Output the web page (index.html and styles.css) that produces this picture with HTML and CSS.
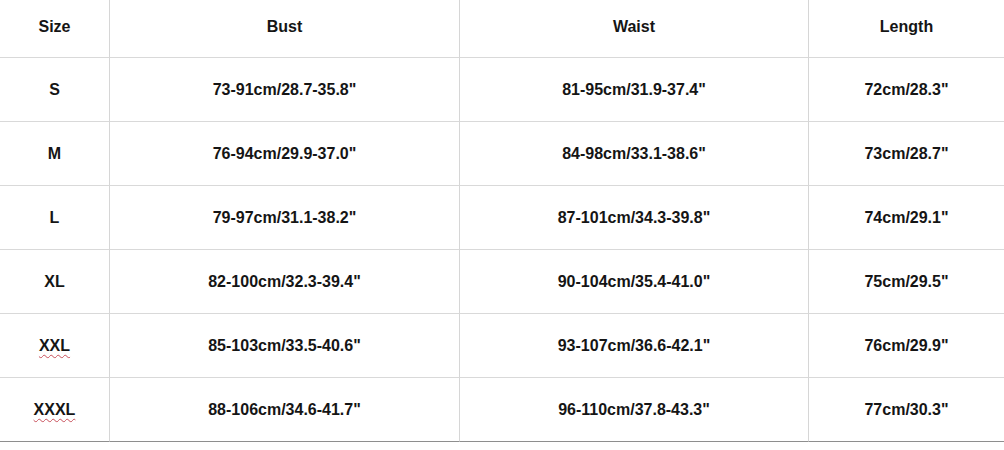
FILE: index.html
```html
<!DOCTYPE html>
<html lang="en">
<head>
<meta charset="utf-8">
<title>Size Chart</title>
<link rel="stylesheet" href="styles.css">
</head>
<body>
<div class="chart">
  <div class="cell head">Size</div>
  <div class="cell head">Bust</div>
  <div class="cell head">Waist</div>
  <div class="cell head last">Length</div>

  <div class="cell">S</div>
  <div class="cell">73-91cm/28.7-35.8"</div>
  <div class="cell">81-95cm/31.9-37.4"</div>
  <div class="cell last">72cm/28.3"</div>

  <div class="cell">M</div>
  <div class="cell">76-94cm/29.9-37.0"</div>
  <div class="cell">84-98cm/33.1-38.6"</div>
  <div class="cell last">73cm/28.7"</div>

  <div class="cell">L</div>
  <div class="cell">79-97cm/31.1-38.2"</div>
  <div class="cell">87-101cm/34.3-39.8"</div>
  <div class="cell last">74cm/29.1"</div>

  <div class="cell">XL</div>
  <div class="cell">82-100cm/32.3-39.4"</div>
  <div class="cell">90-104cm/35.4-41.0"</div>
  <div class="cell last">75cm/29.5"</div>

  <div class="cell"><span class="spell">XXL</span></div>
  <div class="cell">85-103cm/33.5-40.6"</div>
  <div class="cell">93-107cm/36.6-42.1"</div>
  <div class="cell last">76cm/29.9"</div>

  <div class="cell bottom"><span class="spell">XXXL</span></div>
  <div class="cell bottom">88-106cm/34.6-41.7"</div>
  <div class="cell bottom">96-110cm/37.8-43.3"</div>
  <div class="cell bottom last">77cm/30.3"</div>
</div>
</body>
</html>
```
FILE: styles.css
```css
html, body {
  margin: 0;
  padding: 0;
  background: #ffffff;
}

body {
  font-family: "Liberation Sans", Arial, sans-serif;
  color: #151515;
}

.chart {
  display: grid;
  grid-template-columns: 110px 350px 349px 1fr;
  grid-template-rows: 58px repeat(6, 64px);
  width: 1004px;
}

.cell {
  display: flex;
  align-items: center;
  justify-content: center;
  font-size: 16px;
  font-weight: bold;
  border-right: 1px solid #d6d6d6;
  border-bottom: 1px solid #d9d9d9;
  box-sizing: border-box;
}

.cell.head {
  padding-bottom: 3px;
}

.cell.last {
  border-right: none;
}

.cell.bottom {
  border-bottom: 1px solid #8e8e8e;
}

.spell {
  text-decoration: underline wavy #c8505a;
  text-decoration-thickness: 1px;
  text-underline-offset: 3px;
}
```
